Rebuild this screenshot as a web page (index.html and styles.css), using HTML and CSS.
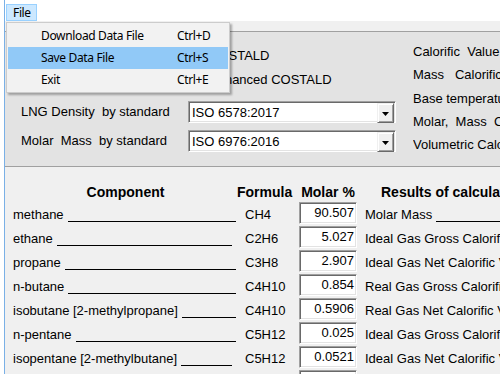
FILE: index.html
```html
<!DOCTYPE html>
<html>
<head>
<meta charset="utf-8">
<link rel="stylesheet" href="styles.css">
</head>
<body>
<div class="window">
  <div class="menubar"><span class="menu-item">File</span></div>
  <div class="band"></div>
  <div class="upper">
    <div class="upper-left">
      <div class="methods">
        <div class="method"><span class="radio"></span><span>COSTALD</span></div>
        <div class="method"><span class="radio"></span><span>Enhanced COSTALD</span></div>
      </div>
      <div class="standards">
        <div class="std-label">LNG Density  by standard</div>
        <div class="combo"><span class="combo-text">ISO 6578:2017</span><span class="combo-btn"><svg width="7" height="4" viewBox="0 0 7 4"><path d="M0 0h7L3.5 4z" fill="#000"/></svg></span></div>
        <div class="std-label">Molar  Mass  by standard</div>
        <div class="combo"><span class="combo-text">ISO 6976:2016</span><span class="combo-btn"><svg width="7" height="4" viewBox="0 0 7 4"><path d="M0 0h7L3.5 4z" fill="#000"/></svg></span></div>
      </div>
    </div>
    <div class="upper-right">
      <div class="info">Calorific  Value by standard</div>
      <div class="info">Mass   Calorific Value</div>
      <div class="info">Base temperature</div>
      <div class="info">Molar,  Mass  Calorific</div>
      <div class="info">Volumetric Calorific Value</div>
    </div>
  </div>
  <div class="lower">
    <div class="table">
      <div class="head head-name">Component</div>
      <div class="head head-formula">Formula</div>
      <div class="head head-center">Molar %</div>
      <div class="head head-results">Results of calculation</div>

      <div class="name">methane<span class="line"></span></div>
      <div class="formula">CH4</div>
      <div class="val">90.507</div>
      <div class="result">Molar Mass<span class="line"></span></div>

      <div class="name">ethane<span class="line short"></span></div>
      <div class="formula">C2H6</div>
      <div class="val">5.027</div>
      <div class="result">Ideal Gas Gross Calorific Value</div>

      <div class="name">propane<span class="line"></span></div>
      <div class="formula">C3H8</div>
      <div class="val">2.907</div>
      <div class="result">Ideal Gas Net Calorific Value</div>

      <div class="name">n-butane<span class="line"></span></div>
      <div class="formula">C4H10</div>
      <div class="val">0.854</div>
      <div class="result">Real Gas Gross Calorific Value</div>

      <div class="name">isobutane [2-methylpropane]<span class="line"></span></div>
      <div class="formula">C4H10</div>
      <div class="val">0.5906</div>
      <div class="result">Real Gas Net Calorific Value</div>

      <div class="name">n-pentane<span class="line"></span></div>
      <div class="formula">C5H12</div>
      <div class="val">0.025</div>
      <div class="result">Ideal Gas Gross Calorific Value</div>

      <div class="name">isopentane [2-methylbutane]<span class="line short"></span></div>
      <div class="formula">C5H12</div>
      <div class="val">0.0521</div>
      <div class="result">Ideal Gas Net Calorific Value</div>

      <div class="name">neopentane [2,2-dimethylpropane]<span class="line"></span></div>
      <div class="formula">C5H12</div>
      <div class="val">0.0</div>
      <div class="result">Real Gas Gross Calorific Value</div>
    </div>
  </div>

  <div class="dropdown">
    <div class="dd-item"><span>Download Data File</span><span>Ctrl+D</span></div>
    <div class="dd-item selected"><span>Save Data File</span><span>Ctrl+S</span></div>
    <div class="dd-item"><span>Exit</span><span>Ctrl+E</span></div>
  </div>
</div>
</body>
</html>
```
FILE: styles.css
```css
html, body {
  margin: 0;
  padding: 0;
}
body {
  width: 500px;
  height: 374px;
  overflow: hidden;
  background: #fff;
  font-family: "Liberation Sans", Arial, sans-serif;
  font-size: 13px;
  color: #000;
}
.window {
  position: relative;
  margin-left: 4px;
  border-left: 1px solid #7ab0e6;
  height: 374px;
  overflow: hidden;
}

/* menu bar */
.menubar {
  height: 21px;
  background: #fff;
  padding-left: 1px;
  box-sizing: border-box;
  font-family: "Noto Sans", sans-serif;
  font-size: 12px;
  letter-spacing: -0.35px;
}
.menu-item {
  display: inline-block;
  margin-top: 4px;
  height: 17px;
  box-sizing: border-box;
  line-height: 15px;
  padding: 0 5px 0 6px;
  background: #cce8ff;
  border: 1px solid #99d1ff;
}
.band {
  height: 10px;
  background: #f0f0f0;
}

/* upper panel */
.upper {
  display: flex;
  height: 136px;
  box-sizing: border-box;
  background: #e3e3e3;
  border-top: 1px solid #a0a0a0;
  border-bottom: 1px solid #a0a0a0;
}
.upper-left {
  width: 408px;
  flex: none;
  box-sizing: border-box;
  padding: 12px 0 0 16px;
}
.methods {
  margin-left: 167px;
}
.method {
  display: flex;
  align-items: center;
  height: 24px;
  line-height: 24px;
  gap: 8px;
}
.radio {
  width: 13px;
  height: 13px;
  box-sizing: border-box;
  border-radius: 50%;
  border: 1px solid #333;
  background: #fff;
}
.standards {
  display: grid;
  grid-template-columns: 167px 208px;
  row-gap: 7px;
  margin-top: 9px;
}
.std-label {
  white-space: pre;
  line-height: 22px;
}
.combo {
  display: flex;
  height: 22px;
  box-sizing: border-box;
  background: #fff;
  border: 1px solid;
  border-color: #a0a0a0 #fff #fff #a0a0a0;
  box-shadow: inset 1px 1px 0 #696969, inset -1px -1px 0 #e3e3e3;
  padding: 1px;
}
.combo-text {
  flex: 1;
  line-height: 20px;
  padding-left: 2px;
}
.combo-btn {
  width: 17px;
  height: 20px;
  box-sizing: border-box;
  display: flex;
  align-items: center;
  justify-content: center;
  background: #f0f0f0;
  border: 1px solid;
  border-color: #f0f0f0 #696969 #696969 #f0f0f0;
  box-shadow: inset 1px 1px 0 #fff, inset -1px -1px 0 #a0a0a0;
}
.combo-btn svg {
  display: block;
  margin-top: 1px;
}
.upper-right {
  flex: 1;
  min-width: 0;
  padding-top: 8px;
}
.info {
  white-space: pre;
  line-height: 23.33px;
  overflow: hidden;
}

/* lower panel */
.lower {
  background: #f0f0f0;
  height: 210px;
  padding: 15px 0 0 8px;
}
.table {
  display: grid;
  grid-template-columns: 225px 61px 58px 1fr;
  grid-template-rows: 18px;
  grid-auto-rows: 22px;
  row-gap: 2px;
}
.head {
  font-weight: bold;
  font-size: 14px;
  line-height: 20px;
  height: 20px;
  white-space: nowrap;
}
.head-name {
  text-align: center;
}
.head-formula {
  margin-left: -1px;
}
.head-center {
  text-align: center;
}
.head-results {
  padding-left: 24px;
  overflow: hidden;
}
.name, .result {
  display: flex;
  align-items: flex-start;
  box-sizing: border-box;
  padding-top: 2px;
  line-height: 22px;
  white-space: nowrap;
  overflow: hidden;
}
.name {
  padding-right: 2px;
}
.line {
  flex: 1;
  height: 17px;
  border-bottom: 1px solid #000;
  margin-left: 4px;
  min-width: 10px;
}
.line.short {
  margin-right: 4px;
}
.formula {
  padding: 2px 0 0 7px;
  line-height: 22px;
}
.val {
  box-sizing: border-box;
  background: #fff;
  border: 1px solid;
  border-color: #a0a0a0 #fff #fff #a0a0a0;
  box-shadow: inset 1px 1px 0 #696969, inset -1px -1px 0 #e3e3e3;
  text-align: right;
  line-height: 20px;
  padding-right: 2px;
}
.result {
  padding-left: 8px;
}

/* dropdown menu */
.dropdown {
  position: absolute;
  left: 1px;
  top: 22px;
  width: 224px;
  height: 71px;
  box-sizing: border-box;
  padding: 2px 1px 0 1px;
  background: #f2f2f2;
  border: 1px solid #cccccc;
  box-shadow: 2px 2px 2px rgba(0, 0, 0, 0.3);
  font-family: "Noto Sans", sans-serif;
  font-size: 12px;
  letter-spacing: -0.35px;
}
.dd-item {
  display: grid;
  grid-template-columns: 136px auto;
  height: 22px;
  line-height: 22px;
  padding-left: 33px;
}
.dd-item.selected {
  background: #91c9f7;
}
```
